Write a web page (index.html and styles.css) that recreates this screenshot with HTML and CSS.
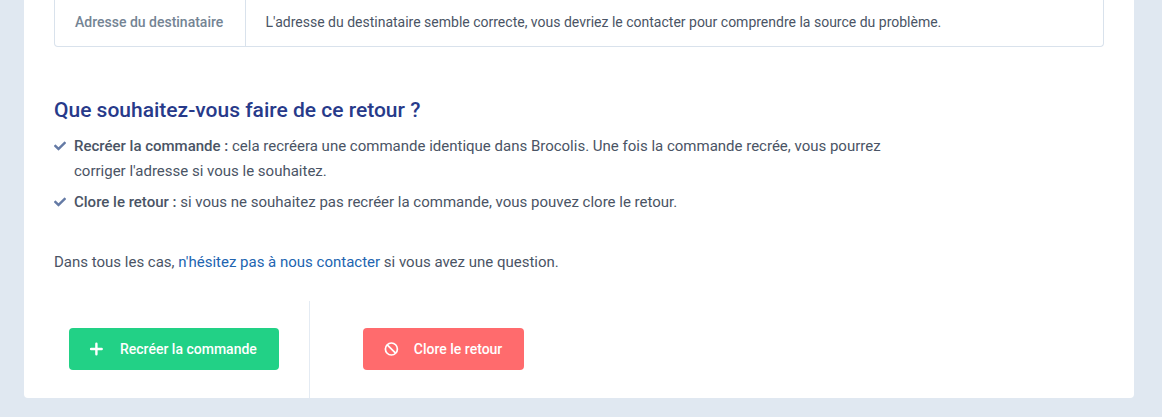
FILE: index.html
```html
<!DOCTYPE html>
<html lang="fr">
<head>
    <meta charset="UTF-8">
    <meta name="viewport" content="width=device-width, initial-scale=1.0">
    <title>Retour - Brocolis</title>
    <link rel="stylesheet" href="styles.css">
</head>
<body>
    <main class="card">
        <div class="table-wrapper">
            <table class="details">
                <tr>
                    <th scope="row">Adresse du destinataire</th>
                    <td>L'adresse du destinataire semble correcte, vous devriez le contacter pour comprendre la source du problème.</td>
                </tr>
            </table>
        </div>

        <section class="choices">
            <h2 class="title">Que souhaitez-vous faire de ce retour ?</h2>
            <ul class="check-list">
                <li>
                    <svg class="check" viewBox="0 0 512 512" fill="currentColor" aria-hidden="true">
                        <path d="M173.898 439.404l-166.4-166.4c-9.997-9.997-9.997-26.206 0-36.204l36.203-36.204c9.997-9.998 26.207-9.998 36.204 0L192 312.69 432.095 72.596c9.997-9.997 26.207-9.997 36.204 0l36.203 36.204c9.997 9.997 9.997 26.206 0 36.204l-294.4 294.401c-9.998 9.997-26.207 9.997-36.204-.001z"/>
                    </svg>
                    <p><strong>Recréer la commande :</strong> cela recréera une commande identique dans Brocolis. Une fois la commande recrée, vous pourrez corriger l'adresse si vous le souhaitez.</p>
                </li>
                <li>
                    <svg class="check" viewBox="0 0 512 512" fill="currentColor" aria-hidden="true">
                        <path d="M173.898 439.404l-166.4-166.4c-9.997-9.997-9.997-26.206 0-36.204l36.203-36.204c9.997-9.998 26.207-9.998 36.204 0L192 312.69 432.095 72.596c9.997-9.997 26.207-9.997 36.204 0l36.203 36.204c9.997 9.997 9.997 26.206 0 36.204l-294.4 294.401c-9.998 9.997-26.207 9.997-36.204-.001z"/>
                    </svg>
                    <p><strong>Clore le retour :</strong> si vous ne souhaitez pas recréer la commande, vous pouvez clore le retour.</p>
                </li>
            </ul>
            <p class="help">Dans tous les cas, <a href="#">n'hésitez pas à nous contacter</a> si vous avez une question.</p>
        </section>

        <div class="actions">
            <div class="action">
                <button type="button" class="btn btn-success">
                    <svg class="icon" viewBox="0 0 14 14" fill="none" stroke="currentColor" stroke-width="2.4" stroke-linecap="round" aria-hidden="true">
                        <path d="M5.4 1.7V12.3M.1 7H10.7"/>
                    </svg>
                    Recréer la commande
                </button>
            </div>
            <div class="action">
                <button type="button" class="btn btn-danger">
                    <svg class="icon" viewBox="0 0 14 14" fill="none" stroke="currentColor" stroke-width="1.7" aria-hidden="true">
                        <circle cx="6.4" cy="7" r="6"/>
                        <path d="M2.2 2.8L10.6 11.2"/>
                    </svg>
                    Clore le retour
                </button>
            </div>
        </div>
    </main>
</body>
</html>
```

FILE: styles.css
```css
* {
    margin: 0;
    padding: 0;
    box-sizing: border-box;
}

body {
    padding: 0 28px 19px 24px;
    font-family: Roboto, "Liberation Sans", sans-serif;
    font-size: 15px;
    line-height: 25px;
    color: #4a5465;
    background: #e0e8f1;
}

.card {
    background: #fff;
    border-radius: 0 0 4px 4px;
}

.table-wrapper {
    margin: 0 30px;
    border: 1px solid #d9e2ec;
    border-top: none;
    border-radius: 0 0 4px 4px;
}

.details {
    width: 100%;
    border-collapse: collapse;
    font-size: 14px;
    line-height: 24px;
    text-align: left;
}

.details th {
    width: 190px;
    padding: 10px 20px 12px;
    border-right: 1px solid #d9e2ec;
    font-weight: 500;
    color: #748494;
    white-space: nowrap;
}

.details td {
    padding: 10px 20px 12px;
}

.choices {
    padding: 48px 30px 26px;
}

.title {
    margin-bottom: 9px;
    font-size: 21px;
    font-weight: 500;
    line-height: 30px;
    color: #273a8a;
}

.check-list {
    max-width: 840px;
    margin-bottom: 35px;
    list-style: none;
}

.check-list li {
    display: flex;
    gap: 8px;
    margin-bottom: 6px;
}

.check-list strong {
    font-weight: 500;
}

.check {
    flex: none;
    width: 12px;
    height: 24px;
    color: #647aa5;
}

.help a {
    color: #2164b0;
    text-decoration: none;
}

.actions {
    display: flex;
}

.action {
    padding: 27px 30px 28px 53px;
}

.action:first-child {
    padding-left: 45px;
    border-right: 1px solid #e4ebf3;
}

.btn {
    display: flex;
    align-items: center;
    gap: 15px;
    height: 42px;
    padding: 0 22px;
    border: none;
    border-radius: 4px;
    font-family: inherit;
    font-size: 14px;
    font-weight: 500;
    color: #fff;
    cursor: pointer;
}

.btn-success {
    background: #22d186;
}

.btn-danger {
    background: #ff6b6d;
}

.icon {
    width: 14px;
    height: 14px;
    overflow: visible;
}
```
